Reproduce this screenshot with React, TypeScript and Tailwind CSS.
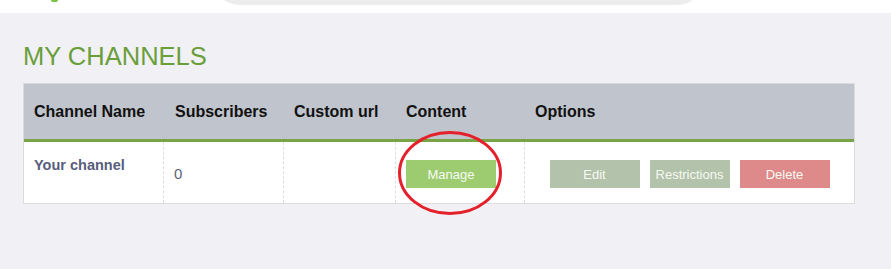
const cols = "grid grid-cols-[139px_120px_112px_129px_1fr]";

function ActionButton({ label, className }: { label: string; className: string }) {
  return (
    <button
      type="button"
      className={`h-[28px] text-[13px] leading-none text-[#f7faf3] ${className}`}
    >
      {label}
    </button>
  );
}

export default function App() {
  return (
    <div className="min-h-[269px] bg-[#f1f1f5] font-['Liberation_Sans',Arial,sans-serif]">
      <div className="flex h-[13px] items-start bg-white">
        <div className="ml-[51px] h-[2px] w-[7px] rounded-b-full bg-[#7cc242]" />
        <div className="ml-[155px] -mt-[49px] h-[54px] w-[491px] rounded-full bg-[#ececec]" />
      </div>

      <div className="px-[23px]">
        <h1 className="mt-[30px] mb-[14px] text-[25.5px] leading-[26px] text-[#6a9e3b]">
          MY CHANNELS
        </h1>

        <div className="w-[832px] border border-[#dcdcdc] bg-white">
          <div
            className={`${cols} h-[58px] items-center border-b-[3px] border-[#79a446] bg-[#c0c4cc] text-[16px] font-bold text-[#111]`}
          >
            <div className="pl-[10px]">Channel Name</div>
            <div className="pl-[12px]">Subscribers</div>
            <div className="pl-[11px]">Custom url</div>
            <div className="pl-[11px]">Content</div>
            <div className="pl-[11px]">Options</div>
          </div>

          <div className={`${cols} h-[61px]`}>
            <div className="pl-[10px] pt-[15px] text-[14.5px] leading-[17px] font-bold text-[#585d7c]">
              Your channel
            </div>
            <div className="border-l border-dashed border-[#dddddd] pl-[10px] pt-[23px] text-[15px] leading-[18px] text-[#5d6478]">
              0
            </div>
            <div className="border-l border-dashed border-[#dddddd]" />
            <div className="relative border-l border-dashed border-[#dddddd] pl-[10px] pt-[18px]">
              <ActionButton label="Manage" className="w-[90px] bg-[#9ccc6f]" />
              <svg
                className="pointer-events-none absolute left-0 -top-[14px]"
                width="110"
                height="90"
                viewBox="0 0 110 90"
              >
                <ellipse
                  cx="54"
                  cy="45"
                  rx="50.5"
                  ry="40.5"
                  fill="none"
                  stroke="#e4202a"
                  strokeWidth="3"
                />
              </svg>
            </div>
            <div className="flex justify-center gap-[10px] border-l border-dashed border-[#dddddd] pt-[18px]">
              <ActionButton label="Edit" className="w-[90px] bg-[#b3c2aa]" />
              <ActionButton label="Restrictions" className="w-[80px] bg-[#b3c2aa]" />
              <ActionButton label="Delete" className="w-[90px] bg-[#de8a8a]" />
            </div>
          </div>
        </div>
      </div>
    </div>
  );
}
